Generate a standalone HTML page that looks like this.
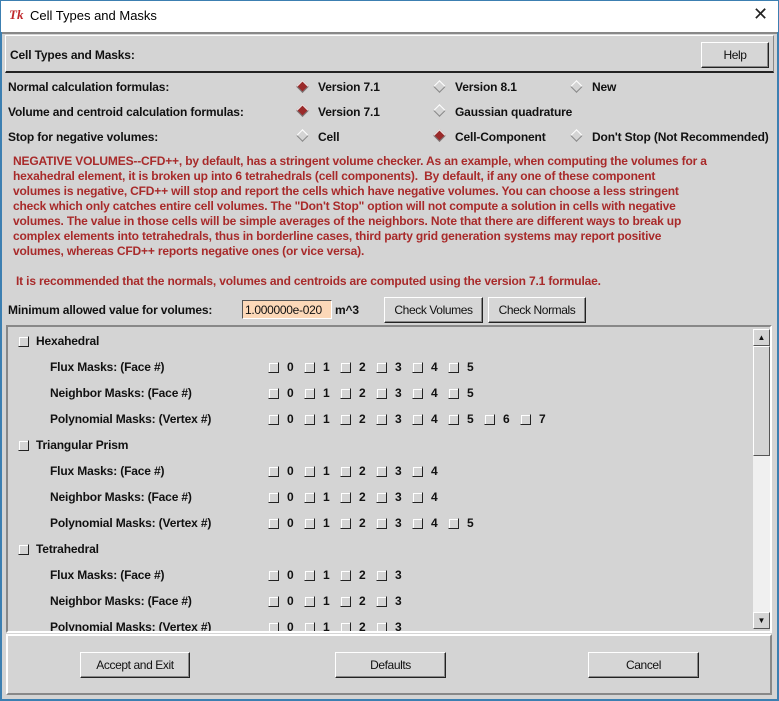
<!DOCTYPE html><html><head><style>
*{margin:0;padding:0;box-sizing:border-box}
body{width:779px;height:701px;background:#d4d4d4;font-family:"Liberation Sans",Arial,sans-serif;position:relative;overflow:hidden;font-size:12px;color:#111}
.a{position:absolute;white-space:nowrap}
.b{font-weight:bold;letter-spacing:-0.15px}
.btn{position:absolute;background:#d6d6d6;border:1px solid;border-color:#fff #222 #222 #fff;box-shadow:inset -1px -1px 0 #888;text-align:center;font-size:12px;letter-spacing:-0.4px}
.dia{position:absolute;width:9px;height:9px;transform:rotate(45deg);border:1px solid;border-color:#fff #888 #888 #fff;background:#d4d4d4}
.dia.on{background:#9a2a2a;border-color:#eee #777 #777 #eee}
.cb{position:absolute;width:11px;height:11px;border:1px solid;border-color:#d4d4d4 #222 #222 #d4d4d4;background:#d4d4d4;box-shadow:inset 1px 1px 0 #fff}
.red{color:#a82a2a;font-weight:bold;font-size:12px;line-height:15px;letter-spacing:-0.17px}
</style></head><body>
<div class="a" style="left:0;top:0;width:779px;height:32px;background:#fff;border-left:1px solid #3c7fb1;border-right:1px solid #3c7fb1;border-top:1px solid #3c7fb1"></div>
<div class="a" style="left:9px;top:7px;color:#c0282c;font-style:italic;font-weight:bold;font-size:13px;font-family:'Liberation Serif',serif">Tk</div>
<div class="a" style="left:30px;top:8px;font-size:13px;color:#000">Cell Types and Masks</div>
<div class="a" style="left:753px;top:4px;font-size:18px;color:#222">✕</div>
<div class="a" style="left:0;top:32px;width:2px;height:669px;background:#3c7fb1"></div>
<div class="a" style="left:777px;top:32px;width:2px;height:669px;background:#3c7fb1"></div>
<div class="a" style="left:0;top:699px;width:779px;height:2px;background:#3c7fb1"></div>
<div class="a" style="left:2px;top:32px;width:775px;height:2px;background:#888"></div>
<div class="a" style="left:5px;top:35px;width:769px;height:38px;border:1px solid;border-color:#fff #888 #222 #fff;border-bottom:2px solid #222"></div>
<div class="a b" style="left:10px;top:48px">Cell Types and Masks:</div>
<div class="btn" style="left:701px;top:42px;width:68px;height:26px;line-height:24px">Help</div>

<div class="a b" style="left:8px;top:80px">Normal calculation formulas:</div>
<div class="dia on" style="left:298px;top:82px"></div><div class="a b" style="left:318px;top:80px">Version 7.1</div>
<div class="dia" style="left:435px;top:82px"></div><div class="a b" style="left:455px;top:80px">Version 8.1</div>
<div class="dia" style="left:572px;top:82px"></div><div class="a b" style="left:592px;top:80px">New</div>
<div class="a b" style="left:8px;top:105px">Volume and centroid calculation formulas:</div>
<div class="dia on" style="left:298px;top:106px"></div><div class="a b" style="left:318px;top:105px">Version 7.1</div>
<div class="dia" style="left:435px;top:106px"></div><div class="a b" style="left:455px;top:105px">Gaussian quadrature</div>
<div class="a b" style="left:8px;top:130px">Stop for negative volumes:</div>
<div class="dia" style="left:298px;top:131px"></div><div class="a b" style="left:318px;top:130px">Cell</div>
<div class="dia on" style="left:435px;top:131px"></div><div class="a b" style="left:455px;top:130px">Cell-Component</div>
<div class="dia" style="left:572px;top:131px"></div><div class="a b" style="left:592px;top:130px">Don't Stop (Not Recommended)</div>

<div class="a red" style="left:13px;top:154px">NEGATIVE VOLUMES--CFD++, by default, has a stringent volume checker. As an example, when computing the volumes for a<br>hexahedral element, it is broken up into 6 tetrahedrals (cell components).&nbsp; By default, if any one of these component<br>volumes is negative, CFD++ will stop and report the cells which have negative volumes. You can choose a less stringent<br>check which only catches entire cell volumes. The "Don't Stop" option will not compute a solution in cells with negative<br>volumes. The value in those cells will be simple averages of the neighbors. Note that there are different ways to break up<br>complex elements into tetrahedrals, thus in borderline cases, third party grid generation systems may report positive<br>volumes, whereas CFD++ reports negative ones (or vice versa).</div>
<div class="a red" style="left:16px;top:274px">It is recommended that the normals, volumes and centroids are computed using the version 7.1 formulae.</div>

<div class="a b" style="left:8px;top:303px">Minimum allowed value for volumes:</div>
<div class="a" style="left:242px;top:300px;width:90px;height:19px;background:#fcd8b8;border:1px solid;border-color:#555 #fff #fff #555;padding:2px 2px;font-size:12px;letter-spacing:-0.3px">1.000000e-020</div>
<div class="a b" style="left:335px;top:303px">m^3</div>
<div class="btn" style="left:384px;top:297px;width:99px;height:26px;line-height:24px">Check Volumes</div>
<div class="btn" style="left:488px;top:297px;width:98px;height:26px;line-height:24px">Check Normals</div>

<div class="a" style="left:6px;top:325px;width:766px;height:308px;border:2px solid;border-color:#888 #fff #fff #888;overflow:hidden">
<div class="a" style="left:745px;top:2px;width:17px;height:300px;background:#f0f0f0"></div>
<div class="a" style="left:745px;top:2px;width:17px;height:17px;background:#d4d4d4;border:1px solid;border-color:#fff #555 #555 #fff;font-size:8px;text-align:center;line-height:15px">▲</div>
<div class="a" style="left:745px;top:285px;width:17px;height:17px;background:#d4d4d4;border:1px solid;border-color:#fff #555 #555 #fff;font-size:8px;text-align:center;line-height:15px">▼</div>
<div class="a" style="left:745px;top:19px;width:17px;height:110px;background:#d4d4d4;border:1px solid;border-color:#fff #555 #555 #fff"></div>
<div id="c"></div>
</div>

<div class="a" style="left:6px;top:634px;width:766px;height:61px;border:2px solid;border-color:#fff #888 #888 #fff"></div>
<div class="btn" style="left:80px;top:652px;width:110px;height:26px;line-height:24px">Accept and Exit</div>
<div class="btn" style="left:335px;top:652px;width:111px;height:26px;line-height:24px">Defaults</div>
<div class="btn" style="left:588px;top:652px;width:111px;height:26px;line-height:24px">Cancel</div>
<script>
var c=document.getElementById('c'),h='';
var groups=[['Hexahedral',[6,6,8]],['Triangular Prism',[5,5,6]],['Tetrahedral',[4,4,4]]];
var subs=['Flux Masks: (Face #)','Neighbor Masks: (Face #)','Polynomial Masks: (Vertex #)'];
var y=9;
groups.forEach(function(g){
h+='<div class="cb" style="left:10px;top:'+(y)+'px"></div><div class="a b" style="left:28px;top:'+(y-2)+'px">'+g[0]+'</div>';y+=26;
for(var s=0;s<3;s++){h+='<div class="a b" style="left:42px;top:'+(y-2)+'px">'+subs[s]+'</div>';
for(var i=0;i<g[1][s];i++){h+='<div class="cb" style="left:'+(260+36*i)+'px;top:'+(y)+'px"></div><div class="a b" style="left:'+(279+36*i)+'px;top:'+(y-2)+'px">'+i+'</div>';}
y+=26;}
});
c.innerHTML=h;
</script>
</body></html>
